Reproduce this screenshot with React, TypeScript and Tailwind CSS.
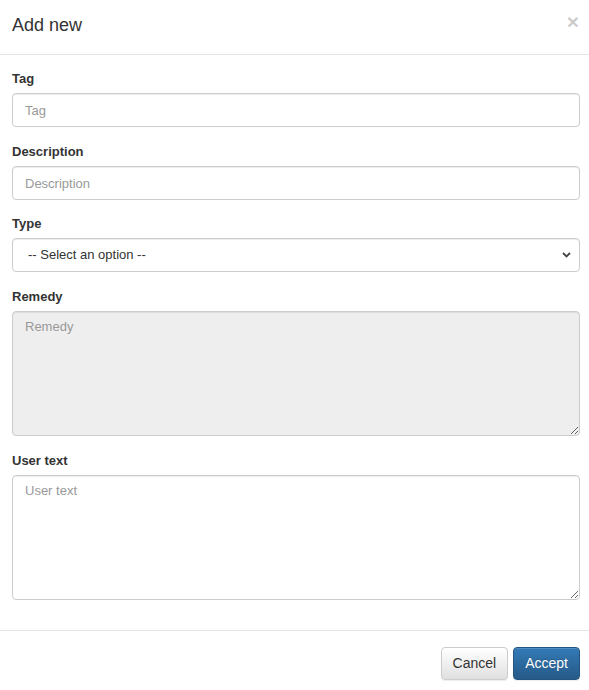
import type { ReactElement } from 'react'

const inputClass =
  'block w-full h-[34px] rounded-[4px] border border-[#ccc] bg-white px-3 text-[13px] text-[#555] placeholder:text-[#999] shadow-[inset_0_1px_1px_rgba(0,0,0,0.075)] outline-none'

const textareaClass =
  'block w-full h-[125px] rounded-[4px] border border-[#ccc] px-3 py-[6px] text-[13px] leading-[18px] text-[#555] placeholder:text-[#999] shadow-[inset_0_1px_1px_rgba(0,0,0,0.075)] outline-none resize-y'

function Field({
  label,
  className = 'mb-[15px]',
  children,
}: {
  label: string
  className?: string
  children: ReactElement
}): ReactElement {
  return (
    <div className={className}>
      <label className="mb-[4px] block text-[13px] font-bold leading-[20px] text-[#333]">
        {label}
      </label>
      {children}
    </div>
  )
}

export default function App(): ReactElement {
  return (
    <div className="min-h-[690px] w-[589px] bg-white font-['Liberation_Sans',Arial,sans-serif] text-[#333]">
      <div className="flex h-[55px] items-center justify-between border-b border-[#e5e5e5] pl-3 pr-[10px]">
        <h4 className="-mt-[4px] text-[18px] leading-[22px] text-[#333]">Add new</h4>
        <button
          aria-label="Close"
          className="-mt-[12px] text-[21px] font-bold leading-none text-black opacity-20"
          type="button"
        >
          ×
        </button>
      </div>

      <div className="pb-[15px] pl-3 pr-[9px] pt-[14px]">
        <Field label="Tag">
          <input className={inputClass} placeholder="Tag" type="text" />
        </Field>
        <Field className="mb-[14px]" label="Description">
          <input className={inputClass} placeholder="Description" type="text" />
        </Field>
        <Field label="Type">
          <div className="relative">
            <select
              className="block h-[34px] w-full appearance-none rounded-[4px] border border-[#ccc] bg-white pl-[15px] text-[13px] text-[#333] shadow-[inset_0_1px_1px_rgba(0,0,0,0.075)] outline-none"
              defaultValue=""
            >
              <option value="">-- Select an option --</option>
            </select>
            <svg
              aria-hidden
              className="pointer-events-none absolute right-[9px] top-[14px]"
              height="6"
              viewBox="0 0 9 6"
              width="9"
            >
              <path d="M1 1l3.5 3.5L8 1" fill="none" stroke="#444" strokeWidth="1.8" />
            </svg>
          </div>
        </Field>
        <Field label="Remedy">
          <textarea className={`${textareaClass} bg-[#eee]`} placeholder="Remedy" readOnly />
        </Field>
        <Field label="User text">
          <textarea className={`${textareaClass} bg-white`} placeholder="User text" />
        </Field>
      </div>

      <div className="flex justify-end gap-[5px] border-t border-[#e5e5e5] pb-[15px] pl-3 pr-[9px] pt-[16px]">
        <button
          className="h-[33px] rounded-[4px] border border-[#ccc] bg-linear-to-b from-white to-[#e0e0e0] px-[11px] text-[14px] text-[#333] shadow-[inset_0_1px_0_rgba(255,255,255,0.15),0_1px_1px_rgba(0,0,0,0.075)]"
          type="button"
        >
          Cancel
        </button>
        <button
          className="h-[33px] rounded-[4px] border border-[#245580] bg-linear-to-b from-[#337ab7] to-[#265a88] px-[11px] text-[14px] text-white shadow-[inset_0_1px_0_rgba(255,255,255,0.15),0_1px_1px_rgba(0,0,0,0.075)] [text-shadow:0_-1px_0_rgba(0,0,0,0.2)]"
          type="button"
        >
          Accept
        </button>
      </div>
    </div>
  )
}
